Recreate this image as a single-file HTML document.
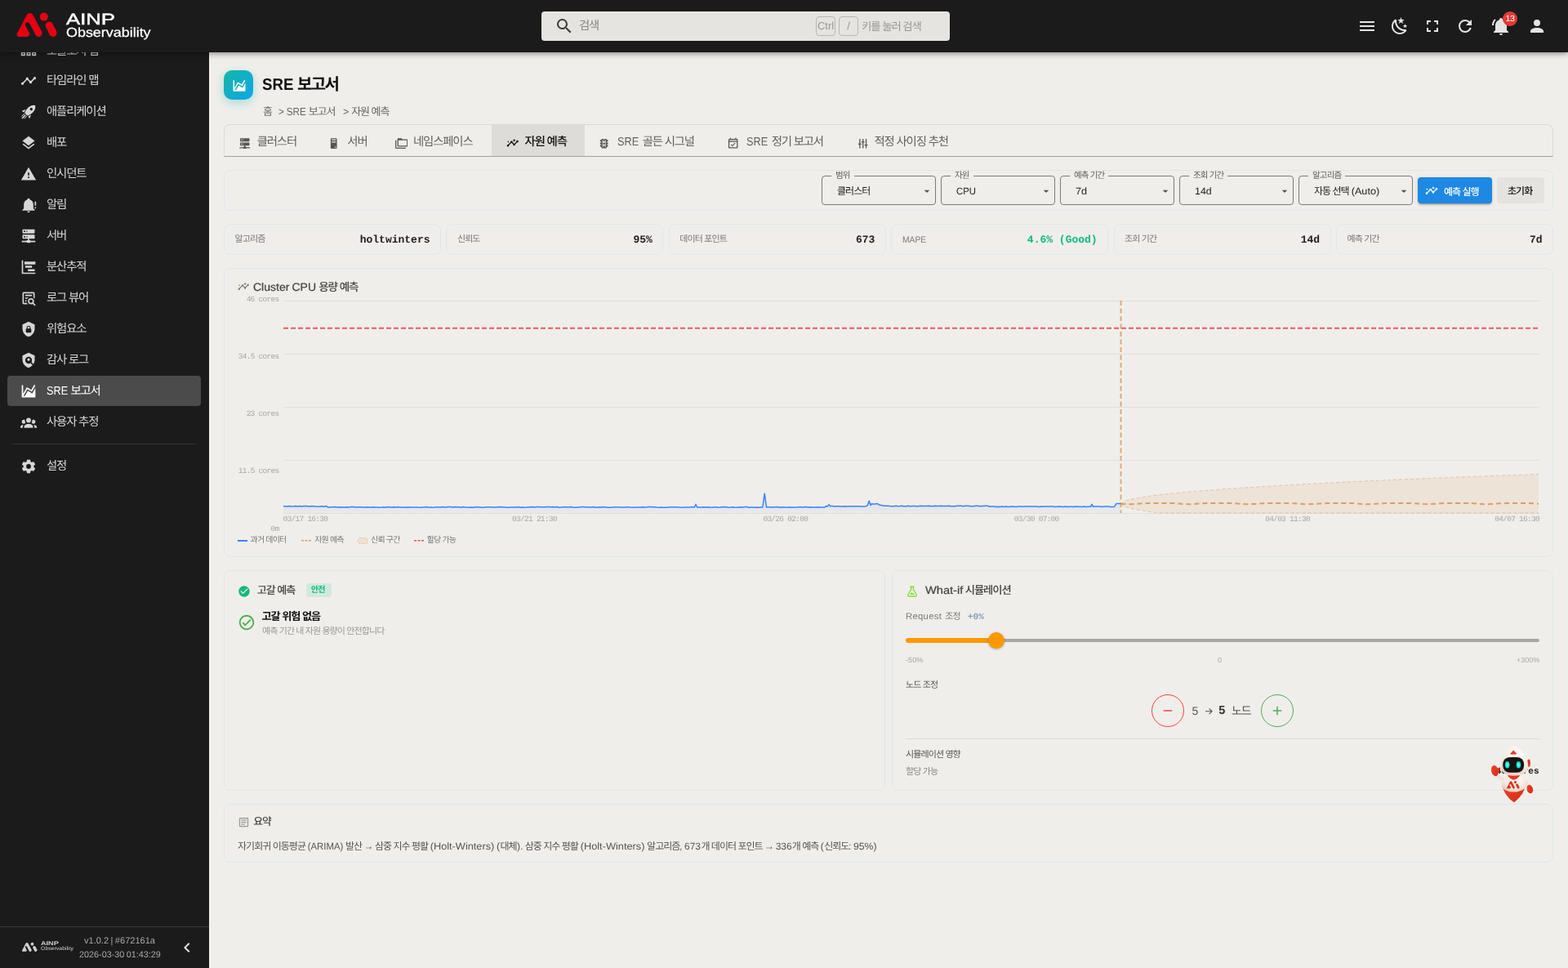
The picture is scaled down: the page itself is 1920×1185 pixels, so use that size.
<!DOCTYPE html>
<html lang="ko">
<head>
<meta charset="utf-8">
<title>SRE 보고서 - AINP Observability</title>
<style>
*{box-sizing:border-box;margin:0;padding:0}
html,body{width:1920px;height:1185px;overflow:hidden}
body{text-rendering:geometricPrecision;font-family:"Liberation Sans","Noto Sans CJK KR",sans-serif;background:#f0eeeb;color:#222;position:relative;font-size:14px}
.kt{letter-spacing:-.08em}
.x{display:inline-block;white-space:pre;transform-origin:0 50%}
.sr{position:absolute;width:1px;height:1px;overflow:hidden;clip:rect(0 0 0 0);white-space:nowrap;opacity:0}
.i{width:24px;height:24px;fill:currentColor;display:block;position:absolute}
.a{position:absolute}
.t{position:absolute;line-height:1;white-space:nowrap}
.mono{font-family:"Liberation Mono",monospace}
/* header */
#hdr{position:absolute;left:0;top:0;width:1920px;height:64px;background:#1b1b1b;z-index:5;will-change:transform;box-shadow:0 2px 4px -1px rgba(0,0,0,.2),0 4px 5px 0 rgba(0,0,0,.14),0 1px 10px 0 rgba(0,0,0,.12)}
#side{position:absolute;left:0;top:64px;width:256px;height:1121px;background:#1b1b1b;color:#d6d6d6;z-index:4;will-change:transform}
#search{position:absolute;left:663px;top:14px;width:500px;height:36px;border-radius:4px;background:#e6e4e0;color:#8a8885}
.kbd{position:absolute;top:6px;height:24px;border:1px solid #b9b7b3;border-radius:4px;color:#9a9895;font-size:13px;line-height:22px;text-align:center}
.hi{color:#e4e4e4}
.badge{position:absolute;left:1840px;top:14px;width:18px;height:18px;border-radius:9px;background:#e53935;color:#fff;font-size:10.5px;line-height:18px;text-align:center;letter-spacing:-.3px}
#search .i{left:16px;top:6px;width:24px;height:24px;color:#3a3a3a}
.hi .i{top:20px;width:24px;height:24px}
.h1{left:1662px}.h2{left:1702px}.h3{left:1742px}.h4{left:1782px}.h5{left:1826px}.h6{left:1870px}
.chv{left:217px;top:1084px;color:#e0e0e0}
/* sidebar */
.nav{position:absolute;left:9px;width:237px;height:37px;border-radius:4px}
.nav .i{left:16px;top:8.6px;width:20px;height:20px}
.nav .t{left:48px;top:11.6px;font-size:14.4px}
.nav .sm{top:6px}
.nav.on{background:#4b4b4b;color:#fff}
/* main */
#main{position:absolute;left:0;top:0;width:1920px;height:1185px;z-index:1;will-change:transform}
.tab{color:#626262;font-size:14.4px;top:167px}
.ti{width:15.4px;height:15.4px;top:168px;color:#555}
.bi{left:8.5px;top:9px;width:16px;height:16px}
.ci{left:291px;top:343.5px;width:14.5px;height:14.5px;color:#7a7a7a}
.ax{font-family:"Liberation Mono",monospace;font-size:9.5px;letter-spacing:-.72px;color:#a9a7a4;line-height:10px}
.c1{left:290.7px;top:715.5px;width:16px;height:16px;color:#10b981}
.c2{left:291px;top:751.3px;width:22px;height:22px;color:#4caf50}
.c3{left:1108.8px;top:715.5px;width:16px;height:16px;color:#8bdc39}
.c4{left:290.9px;top:998.9px;width:15px;height:15px;color:#9a9895}
.pm{left:10px;top:10px;width:18px;height:18px}
.ticon{left:9.5px;top:10px;width:18px;height:18px}
.t1{left:291.6px}.t2{left:400.9px}.t3{left:483.9px}.t4{left:619.8px;color:#111}.t5{left:732.4px}.t6{left:890.1px}.t7{left:1048.6px}
.sel{position:absolute;top:215px;width:140px;height:36px;border:1px solid #7d7b78;border-radius:4px}
.sel .lb{position:absolute;left:11px;top:-5.7px;height:10px;padding:0 5px;background:#f0eeeb;font-size:10.5px;line-height:10px;color:#5e5e5e;white-space:nowrap}
.sel .v{left:18px;top:11.5px;font-size:12px;color:#1c1c1c}
.sel .i{left:120px;top:10px;width:16px;height:16px;color:#555}
.st{position:absolute;top:274px;width:266px;height:38px;border:1px solid #dce8ed;border-radius:8px}
.st .l{left:12.5px;top:13px;font-size:11px;color:#777}
.st .r{right:12.5px;top:12px;font-size:13px;font-weight:bold;color:#1c1c1c;font-family:"Liberation Mono",monospace}
.card{position:absolute;border:1px solid #dce7ec;border-radius:8px;background:#f0eeeb}
.g{color:#6d6b68}
</style>
</head>
<body>
<div id="hdr">
  <svg class="a" style="left:0;top:0" width="256" height="64" viewBox="0 0 256 64" aria-label="AINP Observability">
    <g fill="#e60012">
      <path d="M32.79 18.30A4.30 4.30 0 0 1 40.41 18.30L51.17 38.80A4.30 4.30 0 0 1 49.36 44.61L49.36 44.61A4.30 4.30 0 0 1 43.56 42.80L36.21 28.80A2.80 2.80 0 0 0 32.42 27.62L32.42 27.62A2.80 2.80 0 0 0 31.25 31.40L35.64 39.77A3.50 3.50 0 0 1 32.54 44.90L22.96 44.90A2.50 2.50 0 0 1 20.75 41.24Z"/>
      <circle cx="53.8" cy="20.6" r="5"/>
      <path d="M60.3 31.2L65 40.4" stroke="#e60012" stroke-width="9.2" stroke-linecap="round"/>
    </g>
  </svg>
  <div class="t" id="lg1" style="left:81px;top:14.6px;font-size:19.2px;color:#fff;-webkit-text-stroke:.45px #fff;transform-origin:0 50%;transform:scaleX(1.34)">AINP</div>
  <div class="t" id="lg2" style="left:80.6px;top:32.5px;font-size:16px;color:#fff;-webkit-text-stroke:.25px #fff;transform-origin:0 50%;transform:scaleX(1.12)">Observability</div>
  <div id="search">
    <svg class="i" viewBox="0 0 24 24"><path d="M9.5,3A6.5,6.5 0 0,1 16,9.5C16,11.11 15.41,12.59 14.44,13.73L14.71,14H15.5L20.5,19L19,20.5L14,15.5V14.71L13.73,14.44C12.59,15.41 11.11,16 9.5,16A6.5,6.5 0 0,1 3,9.5A6.5,6.5 0 0,1 9.5,3M9.5,5C7,5 5,7 5,9.5C5,12 7,14 9.5,14C12,14 14,12 14,9.5C14,7 12,5 9.5,5Z"/></svg>
    <div class="t" style="left:46px;top:11px;font-size:14.4px"><span class="kt">검색</span></div>
    <div class="kbd" style="left:336px;width:24px">Ctrl</div>
    <div class="kbd" style="left:364px;width:24px">/</div>
    <div class="t" style="left:392px;top:11.5px;font-size:13.4px;color:#9a9895"><span class="kt">키를 눌러 검색</span></div>
  </div>
  <div class="hi">
    <svg class="i h1" viewBox="0 0 24 24"><path d="M3,6H21V8H3V6M3,11H21V13H3V11M3,16H21V18H3V16Z"/></svg><svg class="i h2" viewBox="0 0 24 24"><path d="M17.75,4.09L15.22,6.03L16.13,9.09L13.5,7.28L10.87,9.09L11.78,6.03L9.25,4.09L12.44,4L13.5,1L14.56,4L17.75,4.09M21.25,11L19.61,12.25L20.2,14.23L18.5,13.06L16.8,14.23L17.39,12.25L15.75,11L17.81,10.95L18.5,9L19.19,10.95L21.25,11M18.97,15.95C19.8,15.87 20.69,17.05 20.16,17.8C19.84,18.25 19.5,18.67 19.08,19.07C15.17,23 8.84,23 4.94,19.07C1.03,15.17 1.03,8.83 4.94,4.93C5.34,4.53 5.76,4.17 6.21,3.85C6.96,3.32 8.14,4.21 8.06,5.04C7.79,7.9 8.75,10.87 10.95,13.06C13.14,15.26 16.1,16.22 18.97,15.95M17.33,17.97C14.5,17.81 11.7,16.64 9.53,14.5C7.36,12.31 6.2,9.5 6.04,6.68C3.23,9.82 3.34,14.64 6.35,17.66C9.37,20.67 14.19,20.78 17.33,17.97Z"/></svg><svg class="i h3" viewBox="0 0 24 24"><path d="M5,5H10V7H7V10H5V5M14,5H19V10H17V7H14V5M17,14H19V19H14V17H17V14M10,17V19H5V14H7V17H10Z"/></svg><svg class="i h4" viewBox="0 0 24 24"><path d="M17.65,6.35C16.2,4.9 14.21,4 12,4A8,8 0 0,0 4,12A8,8 0 0,0 12,20C15.73,20 18.84,17.45 19.73,14H17.65C16.83,16.33 14.61,18 12,18A6,6 0 0,1 6,12A6,6 0 0,1 12,6C13.66,6 15.14,6.69 16.22,7.78L13,11H20V4L17.65,6.35Z"/></svg><svg class="i h5" viewBox="0 0 24 24"><path d="M21,19V20H3V19L5,17V11C5,7.9 7.03,5.17 10,4.29C10,4.19 10,4.1 10,4A2,2 0 0,1 12,2A2,2 0 0,1 14,4C14,4.1 14,4.19 14,4.29C16.97,5.17 19,7.9 19,11V17L21,19M14,21A2,2 0 0,1 12,23A2,2 0 0,1 10,21M19.75,3.19L18.33,4.61C20.04,6.3 21,8.6 21,11H23C23,8.07 21.84,5.25 19.75,3.19M1,11H3C3,8.6 3.96,6.3 5.67,4.61L4.25,3.19C2.16,5.25 1,8.07 1,11Z"/></svg><svg class="i h6" viewBox="0 0 24 24"><path d="M12,4A4,4 0 0,1 16,8A4,4 0 0,1 12,12A4,4 0 0,1 8,8A4,4 0 0,1 12,4M12,14C16.42,14 20,15.79 20,18V20H4V18C4,15.79 7.58,14 12,14Z"/></svg>
  </div>
  <div class="badge">13</div>
</div>
<div id="side">
  <div class="nav" style="top:-20px"><svg class="i sm" viewBox="0 0 24 24"><path d="M15 2H9V8H11V11H5C3.9 11 3 11.9 3 13V16H1V22H7V16H5V13H11V16H9V22H15V16H13V13H19V16H17V22H23V16H21V13C21 11.9 20.11 11 19 11H13V8H15V2M11 4H13V6H11V4M3 18H5V20H3V18M11 18H13V20H11V18M19 18H21V20H19V18Z"/></svg><div class="t"><span class="kt">토폴로지 맵</span></div></div>
  <div class="nav" style="top:16px"><svg class="i" viewBox="0 0 24 24"><path d="M3,14L3.5,14.07L8.07,9.5C7.89,8.85 8.06,8.11 8.59,7.59C9.37,6.8 10.63,6.8 11.41,7.59C11.94,8.11 12.11,8.85 11.93,9.5L14.5,12.07L15,12C15.18,12 15.35,12 15.5,12.07L19.07,8.5C19,8.35 19,8.18 19,8A2,2 0 0,1 21,6A2,2 0 0,1 23,8A2,2 0 0,1 21,10C20.82,10 20.65,10 20.5,9.93L16.93,13.5C17,13.65 17,13.82 17,14A2,2 0 0,1 15,16A2,2 0 0,1 13,14L13.07,13.5L10.5,10.93C10.18,11 9.82,11 9.5,10.93L4.93,15.5L5,16A2,2 0 0,1 3,18A2,2 0 0,1 1,16A2,2 0 0,1 3,14Z"/></svg><div class="t"><span class="kt">타임라인 맵</span></div></div>
  <div class="nav" style="top:54px"><svg class="i" viewBox="0 0 24 24"><path d="M13.13 22.19L11.5 18.36C13.07 17.78 14.54 17 15.9 16.09L13.13 22.19M5.64 12.5L1.81 10.87L7.91 8.1C7 9.46 6.22 10.93 5.64 12.5M21.61 2.39C21.61 2.39 16.66 .269 11 5.93C8.81 8.12 7.5 10.53 6.65 12.64C6.37 13.39 6.56 14.21 7.11 14.77L9.24 16.89C9.79 17.45 10.61 17.63 11.36 17.35C13.5 16.53 15.88 15.19 18.07 13C23.73 7.34 21.61 2.39 21.61 2.39M14.54 9.46C13.76 8.68 13.76 7.41 14.54 6.63S16.59 5.85 17.37 6.63C18.14 7.41 18.15 8.68 17.37 9.46C16.59 10.24 15.32 10.24 14.54 9.46M8.88 16.53L7.47 15.12L8.88 16.53M6.24 22L9.88 18.36C9.54 18.27 9.21 18.12 8.91 17.91L4.83 22H6.24M2 22H3.41L8.18 17.24L6.76 15.83L2 20.59V22M2 19.17L6.09 15.09C5.88 14.79 5.73 14.47 5.64 14.12L2 17.76V19.17Z"/></svg><div class="t"><span class="kt">애플리케이션</span></div></div>
  <div class="nav" style="top:92px"><svg class="i" viewBox="0 0 24 24"><path d="M12,16L19.36,10.27L21,9L12,2L3,9L4.63,10.27M12,18.54L4.62,12.81L3,14.07L12,21.07L21,14.07L19.37,12.8L12,18.54Z"/></svg><div class="t"><span class="kt">배포</span></div></div>
  <div class="nav" style="top:130px"><svg class="i" viewBox="0 0 24 24"><path d="M13,14H11V10H13M13,18H11V16H13M1,21H23L12,2L1,21Z"/></svg><div class="t"><span class="kt">인시던트</span></div></div>
  <div class="nav" style="top:168px"><svg class="i" viewBox="0 0 24 24"><path d="M23,7V13H21V7M21,15H23V17H21M12,2A2,2 0 0,0 10,4A2,2 0 0,0 10,4.29C7.12,5.14 5,7.82 5,11V17L3,19V20H21V19L19,17V11C19,7.82 16.88,5.14 14,4.29A2,2 0 0,0 14,4A2,2 0 0,0 12,2M10,21A2,2 0 0,0 12,23A2,2 0 0,0 14,21H10Z"/></svg><div class="t"><span class="kt">알림</span></div></div>
  <div class="nav" style="top:206px"><svg class="i" viewBox="0 0 24 24"><path d="M13,18H14A1,1 0 0,1 15,19H22V21H15A1,1 0 0,1 14,22H10A1,1 0 0,1 9,21H2V19H9A1,1 0 0,1 10,18H11V16H4A1,1 0 0,1 3,15V11A1,1 0 0,1 4,10H20A1,1 0 0,1 21,11V15A1,1 0 0,1 20,16H13V18M4,2H20A1,1 0 0,1 21,3V7A1,1 0 0,1 20,8H4A1,1 0 0,1 3,7V3A1,1 0 0,1 4,2M9,6H10V4H9V6M9,14H10V12H9V14M5,4V6H7V4H5M5,12V14H7V12H5Z"/></svg><div class="t"><span class="kt">서버</span></div></div>
  <div class="nav" style="top:244px"><svg class="i" viewBox="0 0 24 24"><path d="M2,2H4V20H22V22H2V2M7,10H17V13H7V10M11,15H21V18H11V15M6,4H22V8H6V4Z"/></svg><div class="t"><span class="kt">분산추적</span></div></div>
  <div class="nav" style="top:282px"><svg class="i" viewBox="0 0 24 24"><path d="M15.5,12C18,12 20,14 20,16.5C20,17.38 19.75,18.21 19.31,18.9L22.39,22L21,23.39L17.88,20.32C17.19,20.75 16.37,21 15.5,21C13,21 11,19 11,16.5C11,14 13,12 15.5,12M15.5,14A2.5,2.5 0 0,0 13,16.5A2.5,2.5 0 0,0 15.5,19A2.5,2.5 0 0,0 18,16.5A2.5,2.5 0 0,0 15.5,14M5,3H19C20.11,3 21,3.89 21,5V13.03C20.5,12.23 19.81,11.54 19,11V5H5V19H9.5C9.81,19.75 10.26,20.42 10.81,21H5C3.89,21 3,20.11 3,19V5C3,3.89 3.89,3 5,3M7,7H17V9H7V7M7,11H12.03C11.23,11.5 10.54,12.19 10,13H7V11M7,15H9.17C9.06,15.5 9,16 9,16.5V17H7V15Z"/></svg><div class="t"><span class="kt">로그 뷰어</span></div></div>
  <div class="nav" style="top:320px"><svg class="i" viewBox="0 0 24 24"><path d="M12,1L3,5V11C3,16.55 6.84,21.74 12,23C17.16,21.74 21,16.55 21,11V5L12,1M12,7C13.4,7 14.8,8.1 14.8,9.5V11C15.4,11 16,11.6 16,12.3V15.8C16,16.4 15.4,17 14.7,17H9.2C8.6,17 8,16.4 8,15.7V12.2C8,11.6 8.6,11 9.2,11V9.5C9.2,8.1 10.6,7 12,7M12,8.2C11.2,8.2 10.5,8.7 10.5,9.5V11H13.5V9.5C13.5,8.7 12.8,8.2 12,8.2Z"/></svg><div class="t"><span class="kt">위험요소</span></div></div>
  <div class="nav" style="top:358px"><svg class="i" viewBox="0 0 24 24"><path d="M12,9A2,2 0 0,1 14,11A2,2 0 0,1 12,13A2,2 0 0,1 10,11A2,2 0 0,1 12,9M17.86,19.31C16.23,21.22 14.28,22.45 12,23C9.44,22.39 7.3,20.93 5.58,18.63C3.86,16.34 3,13.8 3,11V5L12,1L21,5V11C21,13.39 20.36,15.61 19.08,17.67L16.17,14.76C16.69,13.97 17,13 17,12C17,9.23 14.76,7 12,7C9.24,7 7,9.23 7,12C7,14.76 9.24,17 12,17C13,17 13.97,16.69 14.76,16.17L17.86,19.31Z"/></svg><div class="t"><span class="kt">감사 로그</span></div></div>
  <div class="nav on" style="top:396px"><svg class="i" viewBox="0 0 24 24"><path d="M17.45,15.18L22,7.31V19L22,21H2V3H4V15.54L9.5,6L16,9.78L20.24,2.45L21.97,3.45L16.74,12.5L10.23,8.75L4.31,19H6.57L10.96,11.44L17.45,15.18Z"/></svg><div class="t"><span class="x" style="width:2.0440em;transform:scaleX(0.8851);word-spacing:-0.0248em">SRE </span><span class="kt">보고서</span></div></div>
  <div class="nav" style="top:434px"><svg class="i" viewBox="0 0 24 24"><path d="M12,5.5A3.5,3.5 0 0,1 15.5,9A3.5,3.5 0 0,1 12,12.5A3.5,3.5 0 0,1 8.5,9A3.5,3.5 0 0,1 12,5.5M5,8C5.56,8 6.08,8.15 6.53,8.42C6.38,9.85 6.8,11.27 7.66,12.38C7.16,13.34 6.16,14 5,14A3,3 0 0,1 2,11A3,3 0 0,1 5,8M19,8A3,3 0 0,1 22,11A3,3 0 0,1 19,14C17.84,14 16.84,13.34 16.34,12.38C17.2,11.27 17.62,9.85 17.47,8.42C17.92,8.15 18.44,8 19,8M5.5,18.25C5.5,16.18 8.41,14.5 12,14.5C15.59,14.5 18.5,16.18 18.5,18.25V20H5.5V18.25M0,20V18.5C0,17.11 1.89,15.94 4.45,15.6C3.86,16.28 3.5,17.22 3.5,18.25V20H0M24,20H20.5V18.25C20.5,17.22 20.14,16.28 19.55,15.6C22.11,15.94 24,17.11 24,18.5V20Z"/></svg><div class="t"><span class="kt">사용자 추정</span></div></div>
  <div class="a" style="left:14px;top:479px;width:227px;height:1px;background:#303030"></div>
  <div class="nav" style="top:488px"><svg class="i" viewBox="0 0 24 24"><path d="M12,15.5A3.5,3.5 0 0,1 8.5,12A3.5,3.5 0 0,1 12,8.5A3.5,3.5 0 0,1 15.5,12A3.5,3.5 0 0,1 12,15.5M19.43,12.97C19.47,12.65 19.5,12.33 19.5,12C19.5,11.67 19.47,11.34 19.43,11L21.54,9.37C21.73,9.22 21.78,8.95 21.66,8.73L19.66,5.27C19.54,5.05 19.27,4.96 19.05,5.05L16.56,6.05C16.04,5.66 15.5,5.32 14.87,5.07L14.5,2.42C14.46,2.18 14.25,2 14,2H10C9.75,2 9.54,2.18 9.5,2.42L9.13,5.07C8.5,5.32 7.96,5.66 7.44,6.05L4.95,5.05C4.73,4.96 4.46,5.05 4.34,5.27L2.34,8.73C2.21,8.95 2.27,9.22 2.46,9.37L4.57,11C4.53,11.34 4.5,11.67 4.5,12C4.5,12.33 4.53,12.65 4.57,12.97L2.46,14.63C2.27,14.78 2.21,15.05 2.34,15.27L4.34,18.73C4.46,18.95 4.73,19.03 4.95,18.95L7.44,17.94C7.96,18.34 8.5,18.68 9.13,18.93L9.5,21.58C9.54,21.82 9.75,22 10,22H14C14.25,22 14.46,21.82 14.5,21.58L14.87,18.93C15.5,18.67 16.04,18.34 16.56,17.94L19.05,18.95C19.27,19.03 19.54,18.95 19.66,18.73L21.66,15.27C21.78,15.05 21.73,14.78 21.54,14.63L19.43,12.97Z"/></svg><div class="t"><span class="kt">설정</span></div></div>
  <div class="a" style="left:0;top:1070px;width:256px;height:1px;background:#3a3a3a"></div>
  <svg class="a" style="left:26px;top:1086px" width="64" height="20" viewBox="18 12 170 40" aria-hidden="true">
    <g fill="#cfcfcf"><path d="M32.79 18.30A4.30 4.30 0 0 1 40.41 18.30L51.17 38.80A4.30 4.30 0 0 1 49.36 44.61L49.36 44.61A4.30 4.30 0 0 1 43.56 42.80L36.21 28.80A2.80 2.80 0 0 0 32.42 27.62L32.42 27.62A2.80 2.80 0 0 0 31.25 31.40L35.64 39.77A3.50 3.50 0 0 1 32.54 44.90L22.96 44.90A2.50 2.50 0 0 1 20.75 41.24Z"/><circle cx="53.8" cy="20.6" r="5"/><path d="M60.3 31.2L65 40.4" stroke="#cfcfcf" stroke-width="9.2" stroke-linecap="round"/></g>
  </svg>
  <div class="t" style="left:50px;top:1087.6px;font-size:7px;font-weight:bold;color:#cfcfcf;transform-origin:0 50%;transform:scaleX(1.3)">AINP</div>
  <div class="t" style="left:50px;top:1095px;font-size:6.3px;color:#cfcfcf;transform-origin:0 50%;transform:scaleX(1.1)">Observability</div>
  <div class="t" style="left:103px;top:1083px;font-size:11px;color:#a9a9a9"><span class="x" style="width:7.9080em;transform:scaleX(1.0036);word-spacing:-0.0546em">v1.0.2 | #672161a</span></div>
  <div class="t" style="left:97px;top:1100px;font-size:10.8px;color:#a9a9a9"><span class="x" style="width:9.2440em;transform:scaleX(1.0014);word-spacing:-0.0541em">2026-03-30 01:43:29</span></div>
  <svg class="i chv" viewBox="0 0 24 24"><path d="M15.41,16.58L10.83,12L15.41,7.41L14,6L8,12L14,18L15.41,16.58Z"/></svg>
</div>
<div id="main">
  <div class="a" style="left:274px;top:86px;width:36px;height:36px;border-radius:10px;background:linear-gradient(135deg,#14b8a6,#0ea5e9);box-shadow:0 4px 12px rgba(20,184,166,.32);color:#fff"><svg class="i ticon" viewBox="0 0 24 24"><path d="M17.45,15.18L22,7.31V19L22,21H2V3H4V15.54L9.5,6L16,9.78L20.24,2.45L21.97,3.45L16.74,12.5L10.23,8.75L4.31,19H6.57L10.96,11.44L17.45,15.18Z"/></svg></div>
  <div class="t" style="left:321px;top:94px;font-size:20px;font-weight:bold;color:#111"><span class="x" style="width:2.1480em;transform:scaleX(0.9343);word-spacing:-0.0349em">SRE </span><span class="kt">보고서</span></div>
  <div class="t g" style="left:322px;top:130px;font-size:13px;color:#666"><span class="kt">홈</span></div>
  <div class="t g" style="left:341px;top:130px;font-size:13px;color:#666"><span class="x" style="width:2.8230em;transform:scaleX(0.8996);word-spacing:-0.0288em">&gt; SRE </span><span class="kt">보고서</span></div>
  <div class="t g" style="left:420px;top:130px;font-size:13px;color:#666"><span class="x" style="width:0.7790em;transform:scaleX(0.9504);word-spacing:-0.0421em">&gt; </span><span class="kt">자원 예측</span></div>

  <div class="a" style="left:274px;top:152px;width:1628px;height:40px;border:1px solid #dcdad6;border-bottom:1px solid #a3a19e;border-radius:8px 8px 0 0"></div>
  <div class="a" style="left:602px;top:153px;width:114px;height:38px;background:#dedcd9"></div>
  <svg class="i ti t1" viewBox="0 0 24 24"><path d="M13,18H14A1,1 0 0,1 15,19H22V21H15A1,1 0 0,1 14,22H10A1,1 0 0,1 9,21H2V19H9A1,1 0 0,1 10,18H11V16H4A1,1 0 0,1 3,15V11A1,1 0 0,1 4,10H20A1,1 0 0,1 21,11V15A1,1 0 0,1 20,16H13V18M4,2H20A1,1 0 0,1 21,3V7A1,1 0 0,1 20,8H4A1,1 0 0,1 3,7V3A1,1 0 0,1 4,2M9,6H10V4H9V6M9,14H10V12H9V14M5,4V6H7V4H5M5,12V14H7V12H5Z"/></svg><div class="t tab" style="left:314.7px"><span class="kt">클러스터</span></div>
  <svg class="i ti t2" viewBox="0 0 24 24"><path d="M8,2H16A2,2 0 0,1 18,4V20A2,2 0 0,1 16,22H8A2,2 0 0,1 6,20V4A2,2 0 0,1 8,2M8,4V6H16V4H8M16,8H8V10H16V8M16,18H14V20H16V18Z"/></svg><div class="t tab" style="left:425.3px"><span class="kt">서버</span></div>
  <svg class="i ti t3" viewBox="0 0 24 24"><path d="M22,4A2,2 0 0,1 24,6V16A2,2 0 0,1 22,18H6A2,2 0 0,1 4,16V4A2,2 0 0,1 6,2H12L14,4H22M2,6V20H20V22H2A2,2 0 0,1 0,20V11H0V6H2M6,6V16H22V6H6Z"/></svg><div class="t tab" style="left:506px"><span class="kt">네임스페이스</span></div>
  <svg class="i ti t4" viewBox="0 0 24 24"><path d="M21 6A2 2 0 0 0 19 8A1.77 1.77 0 0 0 19.09 8.5L15.5 12.09A1.77 1.77 0 0 0 15 12A2 2 0 0 0 14.5 12.07L11.93 9.5A2 2 0 0 0 12 9A2 2 0 0 0 8 9A2 2 0 0 0 8.07 9.5L3.5 14.07A2 2 0 0 0 3 14A2 2 0 1 0 5 16A2 2 0 0 0 4.93 15.5L9.5 10.93A1.79 1.79 0 0 0 10.5 10.93L13.07 13.5A2 2 0 0 0 13 14A2 2 0 0 0 17 14A1.77 1.77 0 0 0 16.91 13.5L20.5 9.91A1.77 1.77 0 0 0 21 10A2 2 0 0 0 21 6M15 9L15.94 6.93L18 6L15.94 5.07L15 3L14.08 5.07L12 6L14.08 6.93M3.5 11L4 9L6 8.5L4 8L3.5 6L3 8L1 8.5L3 9Z"/></svg><div class="t tab" style="left:642.6px;color:#111"><span class="kt" style="font-weight:500">자원 예측</span></div>
  <svg class="i ti t5" viewBox="0 0 24 24"><path d="M12 8C10.9 8 10 7.1 10 6S10.9 4 12 4 14 4.9 14 6 13.1 8 12 8M12 10C10.9 10 10 10.9 10 12S10.9 14 12 14 14 13.1 14 12 13.1 10 12 10M12 16C10.9 16 10 16.9 10 18S10.9 20 12 20 14 19.1 14 18 13.1 16 12 16M20 10H17V8.86C18.72 8.41 20 6.86 20 5H17V4C17 3.45 16.55 3 16 3H8C7.45 3 7 3.45 7 4V5H4C4 6.86 5.28 8.41 7 8.86V10H4C4 11.86 5.28 13.41 7 13.86V15H4C4 16.86 5.28 18.41 7 18.86V20C7 20.55 7.45 21 8 21H16C16.55 21 17 20.55 17 20V18.86C18.72 18.41 20 16.86 20 15H17V13.86C18.72 13.41 20 11.86 20 10M15 19H9V5H15V19Z"/></svg><div class="t tab" style="left:756px"><span class="x" style="width:2.1290em;transform:scaleX(0.8851);word-spacing:0.0713em">SRE </span><span class="kt">골든 시그널</span></div>
  <svg class="i ti t6" viewBox="0 0 24 24"><path d="M19 3H18V1H16V3H8V1H6V3H5C3.9 3 3 3.9 3 5V19C3 20.11 3.9 21 5 21H19C20.11 21 21 20.11 21 19V5C21 3.9 20.11 3 19 3M19 19H5V9H19V19M5 7V5H19V7H5M10.56 17.46L16.5 11.53L15.43 10.47L10.56 15.34L8.45 13.23L7.39 14.29L10.56 17.46Z"/></svg><div class="t tab" style="left:914px"><span class="x" style="width:2.1290em;transform:scaleX(0.8851);word-spacing:0.0713em">SRE </span><span class="kt">정기 보고서</span></div>
  <svg class="i ti t7" viewBox="0 0 24 24"><path d="M5,3V12H3V14H5V21H7V14H9V12H7V3M11,3V8H9V10H11V21H13V10H15V8H13V3M17,3V14H15V16H17V21H19V16H21V14H19V3"/></svg><div class="t tab" style="left:1070.5px"><span class="kt">적정 사이징 추천</span></div>

  <div class="card" style="left:274px;top:208px;width:1628px;height:50px"></div>
  <div class="sel" style="left:1006px"><div class="lb"><span class="kt">범위</span></div><div class="t v"><span class="kt">클러스터</span></div><svg class="i" viewBox="0 0 24 24"><path d="M7,10L12,15L17,10H7Z"/></svg></div>
  <div class="sel" style="left:1152px"><div class="lb"><span class="kt">자원</span></div><div class="t v"><span class="x" style="width:1.9920em;transform:scaleX(0.9435)">CPU</span></div><svg class="i" viewBox="0 0 24 24"><path d="M7,10L12,15L17,10H7Z"/></svg></div>
  <div class="sel" style="left:1298px"><div class="lb"><span class="kt">예측 기간</span></div><div class="t v"><span class="x" style="width:1.1750em;transform:scaleX(1.0564)">7d</span></div><svg class="i" viewBox="0 0 24 24"><path d="M7,10L12,15L17,10H7Z"/></svg></div>
  <div class="sel" style="left:1444px"><div class="lb"><span class="kt">조회 기간</span></div><div class="t v"><span class="x" style="width:1.7300em;transform:scaleX(1.0369)">14d</span></div><svg class="i" viewBox="0 0 24 24"><path d="M7,10L12,15L17,10H7Z"/></svg></div>
  <div class="sel" style="left:1590px"><div class="lb"><span class="kt">알고리즘</span></div><div class="t v"><span class="kt">자동 선택</span><span class="x" style="width:3.0980em;transform:scaleX(1.0554);word-spacing:-0.0656em"> (Auto)</span></div><svg class="i" viewBox="0 0 24 24"><path d="M7,10L12,15L17,10H7Z"/></svg></div>
  <div class="a" style="left:1736px;top:217px;width:91px;height:32px;border-radius:4px;background:#1e88e5;color:#fff;box-shadow:0 3px 1px -2px rgba(0,0,0,.2),0 2px 2px rgba(0,0,0,.14),0 1px 5px rgba(0,0,0,.12)">
    <svg class="i bi" viewBox="0 0 24 24"><path d="M21 6A2 2 0 0 0 19 8A1.77 1.77 0 0 0 19.09 8.5L15.5 12.09A1.77 1.77 0 0 0 15 12A2 2 0 0 0 14.5 12.07L11.93 9.5A2 2 0 0 0 12 9A2 2 0 0 0 8 9A2 2 0 0 0 8.07 9.5L3.5 14.07A2 2 0 0 0 3 14A2 2 0 1 0 5 16A2 2 0 0 0 4.93 15.5L9.5 10.93A1.79 1.79 0 0 0 10.5 10.93L13.07 13.5A2 2 0 0 0 13 14A2 2 0 0 0 17 14A1.77 1.77 0 0 0 16.91 13.5L20.5 9.91A1.77 1.77 0 0 0 21 10A2 2 0 0 0 21 6M15 9L15.94 6.93L18 6L15.94 5.07L15 3L14.08 5.07L12 6L14.08 6.93M3.5 11L4 9L6 8.5L4 8L3.5 6L3 8L1 8.5L3 9Z"/></svg>
    <div class="t" style="left:32px;top:11.5px;font-size:12px"><span class="kt" style="font-weight:500">예측 실행</span></div>
  </div>
  <div class="a" style="left:1833px;top:217px;width:58px;height:32px;border-radius:4px;background:#e5e3e0;color:#111">
    <div class="t" style="left:13px;top:11px;font-size:12px"><span class="kt" style="font-weight:500">초기화</span></div>
  </div>

  <div class="st" style="left:274px"><div class="t l"><span class="kt">알고리즘</span></div><div class="t r">holtwinters</div></div>
  <div class="st" style="left:546.4px"><div class="t l"><span class="kt">신뢰도</span></div><div class="t r">95%</div></div>
  <div class="st" style="left:818.8px"><div class="t l"><span class="kt">데이터 포인트</span></div><div class="t r">673</div></div>
  <div class="st" style="left:1091.2px"><div class="t l" style="top:14px"><span class="x" style="width:2.6420em;transform:scaleX(0.9323)">MAPE</span></div><div class="t r" style="color:#10b981">4.6% (Good)</div></div>
  <div class="st" style="left:1363.6px"><div class="t l"><span class="kt">조회 기간</span></div><div class="t r">14d</div></div>
  <div class="st" style="left:1636px"><div class="t l"><span class="kt">예측 기간</span></div><div class="t r">7d</div></div>
<div class="card" style="left:274px;top:328px;width:1628px;height:354px"></div>
<svg class="i ci" viewBox="0 0 24 24"><path d="M21 6A2 2 0 0 0 19 8A1.77 1.77 0 0 0 19.09 8.5L15.5 12.09A1.77 1.77 0 0 0 15 12A2 2 0 0 0 14.5 12.07L11.93 9.5A2 2 0 0 0 12 9A2 2 0 0 0 8 9A2 2 0 0 0 8.07 9.5L3.5 14.07A2 2 0 0 0 3 14A2 2 0 1 0 5 16A2 2 0 0 0 4.93 15.5L9.5 10.93A1.79 1.79 0 0 0 10.5 10.93L13.07 13.5A2 2 0 0 0 13 14A2 2 0 0 0 17 14A1.77 1.77 0 0 0 16.91 13.5L20.5 9.91A1.77 1.77 0 0 0 21 10A2 2 0 0 0 21 6M15 9L15.94 6.93L18 6L15.94 5.07L15 3L14.08 5.07L12 6L14.08 6.93M3.5 11L4 9L6 8.5L4 8L3.5 6L3 8L1 8.5L3 9Z"/></svg>
<div class="t" style="left:310px;top:345px;font-size:13.6px;color:#444"><span class="x" style="width:5.8920em;transform:scaleX(1.0309);word-spacing:-0.0596em;-webkit-text-stroke:.22px currentColor">Cluster CPU </span><span class="kt" style="font-weight:500">용량 예측</span></div>
<svg class="a" style="left:274px;top:328px" width="1627" height="354" viewBox="274 328 1627 354" aria-label="Cluster CPU forecast chart">
<path d="M347 368.5H1885" stroke="#e1dfdc" stroke-width="1"/>
<path d="M347 433.5H1885" stroke="#e1dfdc" stroke-width="1"/>
<path d="M347 498.5H1885" stroke="#e1dfdc" stroke-width="1"/>
<path d="M347 563.5H1885" stroke="#e1dfdc" stroke-width="1"/>
<path d="M347 628.5H1885" stroke="#e1dfdc" stroke-width="1"/>
<defs><linearGradient id="GA" x1="0" y1="604" x2="0" y2="628" gradientUnits="userSpaceOnUse"><stop offset="0" stop-color="rgba(59,130,246,.16)"/><stop offset="1" stop-color="rgba(59,130,246,.04)"/></linearGradient></defs>
<path d="M347.0 619.8L349.5 619.7L352.0 620.0L354.5 619.6L357.0 619.9L359.5 619.8L362.0 619.6L364.5 619.9L367.0 619.6L369.5 619.9L372.0 619.6L374.5 619.6L377.0 619.8L379.5 620.1L382.0 619.6L384.5 619.7L387.0 620.0L389.5 620.2L392.0 620.0L394.5 619.8L397.0 620.2L399.5 619.6L402.0 621.2L404.5 620.8L407.0 620.7L409.5 620.6L412.0 620.8L414.5 621.1L417.0 620.7L419.5 621.0L422.0 621.0L424.5 620.8L427.0 620.9L429.5 620.6L432.0 620.6L434.5 620.7L437.0 621.0L439.5 620.8L442.0 620.8L444.5 621.0L447.0 620.9L449.5 620.8L452.0 621.1L454.5 621.0L457.0 620.7L459.5 621.0L462.0 620.9L464.5 621.2L467.0 621.1L469.5 620.8L472.0 621.2L474.5 620.6L477.0 620.8L479.5 621.1L482.0 620.7L484.5 620.9L487.0 620.6L489.5 621.0L492.0 621.1L494.5 621.0L497.0 621.2L499.5 620.8L502.0 621.0L504.5 621.0L507.0 621.0L509.5 620.9L512.0 621.1L514.5 621.2L517.0 620.9L519.5 621.0L522.0 620.6L524.5 621.0L527.0 621.0L529.5 621.2L532.0 621.1L534.5 620.7L537.0 620.8L539.5 621.0L542.0 620.6L544.5 620.9L547.0 620.7L549.5 620.6L552.0 620.6L554.5 621.1L557.0 620.6L559.5 620.7L562.0 620.8L564.5 621.2L567.0 620.6L569.5 620.9L572.0 620.9L574.5 621.2L577.0 621.1L579.5 621.2L582.0 620.7L584.5 620.8L587.0 620.8L589.5 621.2L592.0 621.2L594.5 620.7L597.0 620.7L599.5 620.7L602.0 620.7L604.5 620.9L607.0 621.0L609.5 620.7L612.0 620.6L614.5 620.8L617.0 620.8L619.5 620.9L622.0 621.2L624.5 621.0L627.0 620.9L629.5 621.0L632.0 621.0L634.5 620.6L637.0 621.2L639.5 621.1L642.0 621.2L644.5 621.1L647.0 620.8L649.5 620.8L652.0 620.6L654.5 621.0L657.0 620.6L659.5 620.6L662.0 620.7L664.5 620.7L667.0 620.8L669.5 620.6L672.0 620.6L674.5 620.7L677.0 620.6L679.5 620.8L682.0 620.6L684.5 621.2L687.0 621.0L689.5 620.7L692.0 620.7L694.5 620.8L697.0 620.8L699.5 620.6L702.0 621.1L704.5 621.2L707.0 620.9L709.5 620.9L712.0 620.6L714.5 620.6L717.0 620.8L719.5 620.7L722.0 621.1L724.5 620.7L727.0 620.6L729.5 621.2L732.0 620.9L734.5 620.7L737.0 620.9L739.5 620.6L742.0 620.9L744.5 621.2L747.0 621.2L749.5 621.0L752.0 620.7L754.5 620.8L757.0 620.7L759.5 621.1L762.0 620.9L764.5 621.1L767.0 620.8L769.5 620.7L772.0 621.1L774.5 621.2L777.0 621.1L779.5 621.1L782.0 621.1L784.5 621.1L787.0 620.7L789.5 620.9L792.0 620.8L794.5 620.6L797.0 620.6L799.5 620.7L802.0 620.7L804.5 621.0L807.0 621.2L809.5 620.9L812.0 621.2L814.5 621.2L817.0 621.2L819.5 620.8L822.0 620.7L824.5 620.7L827.0 620.7L829.5 620.7L832.0 621.0L834.5 621.2L837.0 621.1L839.5 620.9L842.0 621.0L844.5 621.1L847.0 620.6L849.5 621.0L850.4 621.0L852.0 617.2L853.6 621.0L854.5 621.1L857.0 621.1L859.5 620.9L862.0 620.7L864.5 621.1L867.0 620.8L869.5 621.1L872.0 621.2L874.5 620.8L877.0 620.8L879.5 621.2L882.0 621.1L884.5 620.7L887.0 620.6L889.5 620.7L892.0 621.2L894.5 621.1L897.0 620.7L899.5 621.1L902.0 621.2L904.5 621.0L907.0 620.8L909.5 620.9L912.0 620.6L914.5 620.6L917.0 621.2L919.5 621.0L922.0 620.9L924.5 621.2L927.0 620.9L929.5 621.2L932.0 621.1L933.8 621.0L936.2 604.2L938.6 621.0L939.5 620.8L942.0 620.7L944.5 621.0L947.0 620.7L949.5 620.8L952.0 620.6L954.5 621.2L957.0 620.8L959.5 620.9L962.0 621.0L964.5 621.2L967.0 620.8L969.5 621.2L972.0 620.9L974.5 620.9L977.0 620.9L979.5 620.6L982.0 620.9L984.5 620.7L987.0 620.6L989.5 621.1L992.0 620.7L994.5 620.9L997.0 621.1L999.5 620.9L1002.0 620.8L1004.5 620.9L1007.0 620.9L1009.5 621.1L1012.0 619.5L1013.4 619.9L1015.0 617.6L1016.6 619.9L1017.0 619.6L1019.5 619.6L1022.0 620.0L1024.5 619.8L1027.0 619.8L1029.5 620.0L1032.0 620.1L1034.5 619.8L1037.0 619.9L1039.5 619.8L1042.0 619.8L1044.5 619.9L1047.0 619.8L1049.5 619.8L1052.0 619.8L1054.5 620.1L1057.0 619.9L1059.5 620.1L1062.0 618.8L1062.4 618.6L1064.2 613.3L1066.0 618.6L1067.0 616.8L1069.5 617.1L1072.0 617.0L1074.5 616.5L1077.0 618.3L1079.5 618.6L1082.0 619.2L1084.5 619.3L1087.0 619.2L1089.5 619.6L1092.0 619.7L1094.5 619.8L1097.0 619.3L1099.5 619.7L1102.0 619.6L1104.5 619.3L1107.0 619.8L1109.5 619.8L1112.0 619.3L1114.5 619.8L1117.0 619.4L1119.5 619.5L1122.0 619.8L1124.5 619.7L1127.0 619.3L1129.5 619.5L1132.0 619.5L1134.5 619.4L1137.0 619.3L1139.5 619.4L1142.0 619.7L1144.5 619.2L1147.0 619.5L1149.5 619.5L1152.0 619.2L1154.5 619.4L1157.0 619.6L1159.5 619.5L1162.0 619.2L1164.5 619.8L1167.0 619.7L1169.5 619.8L1172.0 619.2L1174.5 619.3L1177.0 619.2L1179.5 619.7L1182.0 619.3L1184.5 619.2L1187.0 619.4L1189.5 619.8L1192.0 619.7L1194.5 619.3L1197.0 619.3L1199.5 619.8L1202.0 619.5L1204.5 619.6L1207.0 619.2L1209.5 619.2L1212.0 620.3L1214.5 620.1L1217.0 619.9L1219.5 620.5L1222.0 620.3L1224.5 620.4L1227.0 619.9L1229.5 620.4L1232.0 619.9L1234.5 620.5L1237.0 620.2L1239.5 620.1L1242.0 620.2L1244.5 620.5L1247.0 620.0L1249.5 619.9L1252.0 620.2L1254.5 620.0L1257.0 619.9L1259.5 620.0L1262.0 619.9L1264.5 620.0L1267.0 620.1L1269.5 620.1L1272.0 620.4L1274.5 620.1L1277.0 620.2L1279.5 620.0L1282.0 620.1L1284.5 619.9L1287.0 620.0L1289.5 619.9L1292.0 620.4L1294.5 620.2L1297.0 620.0L1299.5 620.2L1302.0 620.5L1304.5 619.9L1307.0 620.4L1309.5 620.2L1312.0 620.2L1314.5 620.4L1317.0 620.1L1319.5 620.2L1322.0 620.3L1324.5 620.5L1327.0 620.1L1329.5 620.4L1332.0 620.3L1334.5 620.3L1335.4 620.3L1337.0 617.3L1338.6 620.3L1339.5 620.1L1342.0 619.9L1344.5 619.9L1347.0 619.9L1349.5 620.4L1352.0 620.0L1354.5 620.0L1357.0 619.9L1359.5 620.4L1362.0 620.5L1364.5 620.3L1367.0 616.5L1369.5 616.5L1372.0 616.6L1372.5 616.7L1372.5 628L347 628Z" fill="url(#GA)"/>
<path d="M1372.5 616.8L1376.5 613.6L1380.5 612.2L1384.5 611.2L1388.5 610.4L1392.5 609.6L1396.5 608.9L1400.5 608.3L1404.5 607.7L1408.5 607.1L1412.5 606.6L1416.5 606.1L1420.5 605.6L1424.5 605.2L1428.5 604.8L1432.5 604.3L1436.5 603.9L1440.5 603.5L1444.5 603.1L1448.5 602.8L1452.5 602.4L1456.5 602.0L1460.5 601.7L1464.5 601.4L1468.5 601.0L1472.5 600.7L1476.5 600.4L1480.5 600.1L1484.5 599.8L1488.5 599.5L1492.5 599.2L1496.5 598.9L1500.5 598.6L1504.5 598.3L1508.5 598.0L1512.5 597.8L1516.5 597.5L1520.5 597.2L1524.5 597.0L1528.5 596.7L1532.5 596.4L1536.5 596.2L1540.5 595.9L1544.5 595.7L1548.5 595.4L1552.5 595.2L1556.5 595.0L1560.5 594.7L1564.5 594.5L1568.5 594.3L1572.5 594.0L1576.5 593.8L1580.5 593.6L1584.5 593.4L1588.5 593.1L1592.5 592.9L1596.5 592.7L1600.5 592.5L1604.5 592.3L1608.5 592.1L1612.5 591.9L1616.5 591.7L1620.5 591.4L1624.5 591.2L1628.5 591.0L1632.5 590.8L1636.5 590.6L1640.5 590.4L1644.5 590.2L1648.5 590.1L1652.5 589.9L1656.5 589.7L1660.5 589.5L1664.5 589.3L1668.5 589.1L1672.5 588.9L1676.5 588.7L1680.5 588.5L1684.5 588.4L1688.5 588.2L1692.5 588.0L1696.5 587.8L1700.5 587.6L1704.5 587.5L1708.5 587.3L1712.5 587.1L1716.5 586.9L1720.5 586.8L1724.5 586.6L1728.5 586.4L1732.5 586.3L1736.5 586.1L1740.5 585.9L1744.5 585.7L1748.5 585.6L1752.5 585.4L1756.5 585.3L1760.5 585.1L1764.5 584.9L1768.5 584.8L1772.5 584.6L1776.5 584.4L1780.5 584.3L1784.5 584.1L1788.5 584.0L1792.5 583.8L1796.5 583.6L1800.5 583.5L1804.5 583.3L1808.5 583.2L1812.5 583.0L1816.5 582.9L1820.5 582.7L1824.5 582.6L1828.5 582.4L1832.5 582.3L1836.5 582.1L1840.5 582.0L1844.5 581.8L1848.5 581.7L1852.5 581.5L1856.5 581.4L1860.5 581.2L1864.5 581.1L1868.5 580.9L1872.5 580.8L1876.5 580.7L1880.5 580.5L1884.0 580.4L1884.0 628.0L1880.5 628.0L1876.5 628.0L1872.5 628.0L1868.5 628.0L1864.5 628.0L1860.5 628.0L1856.5 628.0L1852.5 628.0L1848.5 628.0L1844.5 628.0L1840.5 628.0L1836.5 628.0L1832.5 628.0L1828.5 628.0L1824.5 628.0L1820.5 628.0L1816.5 628.0L1812.5 628.0L1808.5 628.0L1804.5 628.0L1800.5 628.0L1796.5 628.0L1792.5 628.0L1788.5 628.0L1784.5 628.0L1780.5 628.0L1776.5 628.0L1772.5 628.0L1768.5 628.0L1764.5 628.0L1760.5 628.0L1756.5 628.0L1752.5 628.0L1748.5 628.0L1744.5 628.0L1740.5 628.0L1736.5 628.0L1732.5 628.0L1728.5 628.0L1724.5 628.0L1720.5 628.0L1716.5 628.0L1712.5 628.0L1708.5 628.0L1704.5 628.0L1700.5 628.0L1696.5 628.0L1692.5 628.0L1688.5 628.0L1684.5 628.0L1680.5 628.0L1676.5 628.0L1672.5 628.0L1668.5 628.0L1664.5 628.0L1660.5 628.0L1656.5 628.0L1652.5 628.0L1648.5 628.0L1644.5 628.0L1640.5 628.0L1636.5 628.0L1632.5 628.0L1628.5 628.0L1624.5 628.0L1620.5 628.0L1616.5 628.0L1612.5 628.0L1608.5 628.0L1604.5 628.0L1600.5 628.0L1596.5 628.0L1592.5 628.0L1588.5 628.0L1584.5 628.0L1580.5 628.0L1576.5 628.0L1572.5 628.0L1568.5 628.0L1564.5 628.0L1560.5 628.0L1556.5 628.0L1552.5 628.0L1548.5 628.0L1544.5 628.0L1540.5 628.0L1536.5 628.0L1532.5 628.0L1528.5 628.0L1524.5 628.0L1520.5 628.0L1516.5 628.0L1512.5 628.0L1508.5 628.0L1504.5 628.0L1500.5 628.0L1496.5 628.0L1492.5 628.0L1488.5 628.0L1484.5 628.0L1480.5 628.0L1476.5 628.0L1472.5 628.0L1468.5 628.0L1464.5 628.0L1460.5 628.0L1456.5 628.0L1452.5 628.0L1448.5 628.0L1444.5 628.0L1440.5 628.0L1436.5 628.0L1432.5 628.0L1428.5 628.0L1424.5 628.0L1420.5 628.0L1416.5 627.5L1412.5 627.0L1408.5 626.5L1404.5 625.9L1400.5 625.3L1396.5 624.7L1392.5 624.0L1388.5 623.2L1384.5 622.4L1380.5 621.4L1376.5 620.0L1372.5 616.8Z" fill="rgba(217,160,102,.14)"/>
<path d="M1372.5 616.8L1376.5 613.6L1380.5 612.2L1384.5 611.2L1388.5 610.4L1392.5 609.6L1396.5 608.9L1400.5 608.3L1404.5 607.7L1408.5 607.1L1412.5 606.6L1416.5 606.1L1420.5 605.6L1424.5 605.2L1428.5 604.8L1432.5 604.3L1436.5 603.9L1440.5 603.5L1444.5 603.1L1448.5 602.8L1452.5 602.4L1456.5 602.0L1460.5 601.7L1464.5 601.4L1468.5 601.0L1472.5 600.7L1476.5 600.4L1480.5 600.1L1484.5 599.8L1488.5 599.5L1492.5 599.2L1496.5 598.9L1500.5 598.6L1504.5 598.3L1508.5 598.0L1512.5 597.8L1516.5 597.5L1520.5 597.2L1524.5 597.0L1528.5 596.7L1532.5 596.4L1536.5 596.2L1540.5 595.9L1544.5 595.7L1548.5 595.4L1552.5 595.2L1556.5 595.0L1560.5 594.7L1564.5 594.5L1568.5 594.3L1572.5 594.0L1576.5 593.8L1580.5 593.6L1584.5 593.4L1588.5 593.1L1592.5 592.9L1596.5 592.7L1600.5 592.5L1604.5 592.3L1608.5 592.1L1612.5 591.9L1616.5 591.7L1620.5 591.4L1624.5 591.2L1628.5 591.0L1632.5 590.8L1636.5 590.6L1640.5 590.4L1644.5 590.2L1648.5 590.1L1652.5 589.9L1656.5 589.7L1660.5 589.5L1664.5 589.3L1668.5 589.1L1672.5 588.9L1676.5 588.7L1680.5 588.5L1684.5 588.4L1688.5 588.2L1692.5 588.0L1696.5 587.8L1700.5 587.6L1704.5 587.5L1708.5 587.3L1712.5 587.1L1716.5 586.9L1720.5 586.8L1724.5 586.6L1728.5 586.4L1732.5 586.3L1736.5 586.1L1740.5 585.9L1744.5 585.7L1748.5 585.6L1752.5 585.4L1756.5 585.3L1760.5 585.1L1764.5 584.9L1768.5 584.8L1772.5 584.6L1776.5 584.4L1780.5 584.3L1784.5 584.1L1788.5 584.0L1792.5 583.8L1796.5 583.6L1800.5 583.5L1804.5 583.3L1808.5 583.2L1812.5 583.0L1816.5 582.9L1820.5 582.7L1824.5 582.6L1828.5 582.4L1832.5 582.3L1836.5 582.1L1840.5 582.0L1844.5 581.8L1848.5 581.7L1852.5 581.5L1856.5 581.4L1860.5 581.2L1864.5 581.1L1868.5 580.9L1872.5 580.8L1876.5 580.7L1880.5 580.5L1884.0 580.4" fill="none" stroke="rgba(217,160,102,.5)" stroke-width="1" stroke-dasharray="4 3"/>
<path d="M1372.5 616.8L1376.5 620.0L1380.5 621.4L1384.5 622.4L1388.5 623.2L1392.5 624.0L1396.5 624.7L1400.5 625.3L1404.5 625.9L1408.5 626.5L1412.5 627.0L1416.5 627.5L1420.5 628.0L1424.5 628.0L1428.5 628.0L1432.5 628.0L1436.5 628.0L1440.5 628.0L1444.5 628.0L1448.5 628.0L1452.5 628.0L1456.5 628.0L1460.5 628.0L1464.5 628.0L1468.5 628.0L1472.5 628.0L1476.5 628.0L1480.5 628.0L1484.5 628.0L1488.5 628.0L1492.5 628.0L1496.5 628.0L1500.5 628.0L1504.5 628.0L1508.5 628.0L1512.5 628.0L1516.5 628.0L1520.5 628.0L1524.5 628.0L1528.5 628.0L1532.5 628.0L1536.5 628.0L1540.5 628.0L1544.5 628.0L1548.5 628.0L1552.5 628.0L1556.5 628.0L1560.5 628.0L1564.5 628.0L1568.5 628.0L1572.5 628.0L1576.5 628.0L1580.5 628.0L1584.5 628.0L1588.5 628.0L1592.5 628.0L1596.5 628.0L1600.5 628.0L1604.5 628.0L1608.5 628.0L1612.5 628.0L1616.5 628.0L1620.5 628.0L1624.5 628.0L1628.5 628.0L1632.5 628.0L1636.5 628.0L1640.5 628.0L1644.5 628.0L1648.5 628.0L1652.5 628.0L1656.5 628.0L1660.5 628.0L1664.5 628.0L1668.5 628.0L1672.5 628.0L1676.5 628.0L1680.5 628.0L1684.5 628.0L1688.5 628.0L1692.5 628.0L1696.5 628.0L1700.5 628.0L1704.5 628.0L1708.5 628.0L1712.5 628.0L1716.5 628.0L1720.5 628.0L1724.5 628.0L1728.5 628.0L1732.5 628.0L1736.5 628.0L1740.5 628.0L1744.5 628.0L1748.5 628.0L1752.5 628.0L1756.5 628.0L1760.5 628.0L1764.5 628.0L1768.5 628.0L1772.5 628.0L1776.5 628.0L1780.5 628.0L1784.5 628.0L1788.5 628.0L1792.5 628.0L1796.5 628.0L1800.5 628.0L1804.5 628.0L1808.5 628.0L1812.5 628.0L1816.5 628.0L1820.5 628.0L1824.5 628.0L1828.5 628.0L1832.5 628.0L1836.5 628.0L1840.5 628.0L1844.5 628.0L1848.5 628.0L1852.5 628.0L1856.5 628.0L1860.5 628.0L1864.5 628.0L1868.5 628.0L1872.5 628.0L1876.5 628.0L1880.5 628.0L1884.0 628.0" fill="none" stroke="rgba(217,160,102,.5)" stroke-width="1" stroke-dasharray="4 3"/>
<path d="M347 401.8H1885" stroke="#ec5a5a" stroke-width="2" stroke-dasharray="6 3"/>
<path d="M1372.5 368V628" stroke="rgba(217,160,102,.85)" stroke-width="2" stroke-dasharray="6 3.5"/>
<path d="M347.0 619.8L349.5 619.7L352.0 620.0L354.5 619.6L357.0 619.9L359.5 619.8L362.0 619.6L364.5 619.9L367.0 619.6L369.5 619.9L372.0 619.6L374.5 619.6L377.0 619.8L379.5 620.1L382.0 619.6L384.5 619.7L387.0 620.0L389.5 620.2L392.0 620.0L394.5 619.8L397.0 620.2L399.5 619.6L402.0 621.2L404.5 620.8L407.0 620.7L409.5 620.6L412.0 620.8L414.5 621.1L417.0 620.7L419.5 621.0L422.0 621.0L424.5 620.8L427.0 620.9L429.5 620.6L432.0 620.6L434.5 620.7L437.0 621.0L439.5 620.8L442.0 620.8L444.5 621.0L447.0 620.9L449.5 620.8L452.0 621.1L454.5 621.0L457.0 620.7L459.5 621.0L462.0 620.9L464.5 621.2L467.0 621.1L469.5 620.8L472.0 621.2L474.5 620.6L477.0 620.8L479.5 621.1L482.0 620.7L484.5 620.9L487.0 620.6L489.5 621.0L492.0 621.1L494.5 621.0L497.0 621.2L499.5 620.8L502.0 621.0L504.5 621.0L507.0 621.0L509.5 620.9L512.0 621.1L514.5 621.2L517.0 620.9L519.5 621.0L522.0 620.6L524.5 621.0L527.0 621.0L529.5 621.2L532.0 621.1L534.5 620.7L537.0 620.8L539.5 621.0L542.0 620.6L544.5 620.9L547.0 620.7L549.5 620.6L552.0 620.6L554.5 621.1L557.0 620.6L559.5 620.7L562.0 620.8L564.5 621.2L567.0 620.6L569.5 620.9L572.0 620.9L574.5 621.2L577.0 621.1L579.5 621.2L582.0 620.7L584.5 620.8L587.0 620.8L589.5 621.2L592.0 621.2L594.5 620.7L597.0 620.7L599.5 620.7L602.0 620.7L604.5 620.9L607.0 621.0L609.5 620.7L612.0 620.6L614.5 620.8L617.0 620.8L619.5 620.9L622.0 621.2L624.5 621.0L627.0 620.9L629.5 621.0L632.0 621.0L634.5 620.6L637.0 621.2L639.5 621.1L642.0 621.2L644.5 621.1L647.0 620.8L649.5 620.8L652.0 620.6L654.5 621.0L657.0 620.6L659.5 620.6L662.0 620.7L664.5 620.7L667.0 620.8L669.5 620.6L672.0 620.6L674.5 620.7L677.0 620.6L679.5 620.8L682.0 620.6L684.5 621.2L687.0 621.0L689.5 620.7L692.0 620.7L694.5 620.8L697.0 620.8L699.5 620.6L702.0 621.1L704.5 621.2L707.0 620.9L709.5 620.9L712.0 620.6L714.5 620.6L717.0 620.8L719.5 620.7L722.0 621.1L724.5 620.7L727.0 620.6L729.5 621.2L732.0 620.9L734.5 620.7L737.0 620.9L739.5 620.6L742.0 620.9L744.5 621.2L747.0 621.2L749.5 621.0L752.0 620.7L754.5 620.8L757.0 620.7L759.5 621.1L762.0 620.9L764.5 621.1L767.0 620.8L769.5 620.7L772.0 621.1L774.5 621.2L777.0 621.1L779.5 621.1L782.0 621.1L784.5 621.1L787.0 620.7L789.5 620.9L792.0 620.8L794.5 620.6L797.0 620.6L799.5 620.7L802.0 620.7L804.5 621.0L807.0 621.2L809.5 620.9L812.0 621.2L814.5 621.2L817.0 621.2L819.5 620.8L822.0 620.7L824.5 620.7L827.0 620.7L829.5 620.7L832.0 621.0L834.5 621.2L837.0 621.1L839.5 620.9L842.0 621.0L844.5 621.1L847.0 620.6L849.5 621.0L850.4 621.0L852.0 617.2L853.6 621.0L854.5 621.1L857.0 621.1L859.5 620.9L862.0 620.7L864.5 621.1L867.0 620.8L869.5 621.1L872.0 621.2L874.5 620.8L877.0 620.8L879.5 621.2L882.0 621.1L884.5 620.7L887.0 620.6L889.5 620.7L892.0 621.2L894.5 621.1L897.0 620.7L899.5 621.1L902.0 621.2L904.5 621.0L907.0 620.8L909.5 620.9L912.0 620.6L914.5 620.6L917.0 621.2L919.5 621.0L922.0 620.9L924.5 621.2L927.0 620.9L929.5 621.2L932.0 621.1L933.8 621.0L936.2 604.2L938.6 621.0L939.5 620.8L942.0 620.7L944.5 621.0L947.0 620.7L949.5 620.8L952.0 620.6L954.5 621.2L957.0 620.8L959.5 620.9L962.0 621.0L964.5 621.2L967.0 620.8L969.5 621.2L972.0 620.9L974.5 620.9L977.0 620.9L979.5 620.6L982.0 620.9L984.5 620.7L987.0 620.6L989.5 621.1L992.0 620.7L994.5 620.9L997.0 621.1L999.5 620.9L1002.0 620.8L1004.5 620.9L1007.0 620.9L1009.5 621.1L1012.0 619.5L1013.4 619.9L1015.0 617.6L1016.6 619.9L1017.0 619.6L1019.5 619.6L1022.0 620.0L1024.5 619.8L1027.0 619.8L1029.5 620.0L1032.0 620.1L1034.5 619.8L1037.0 619.9L1039.5 619.8L1042.0 619.8L1044.5 619.9L1047.0 619.8L1049.5 619.8L1052.0 619.8L1054.5 620.1L1057.0 619.9L1059.5 620.1L1062.0 618.8L1062.4 618.6L1064.2 613.3L1066.0 618.6L1067.0 616.8L1069.5 617.1L1072.0 617.0L1074.5 616.5L1077.0 618.3L1079.5 618.6L1082.0 619.2L1084.5 619.3L1087.0 619.2L1089.5 619.6L1092.0 619.7L1094.5 619.8L1097.0 619.3L1099.5 619.7L1102.0 619.6L1104.5 619.3L1107.0 619.8L1109.5 619.8L1112.0 619.3L1114.5 619.8L1117.0 619.4L1119.5 619.5L1122.0 619.8L1124.5 619.7L1127.0 619.3L1129.5 619.5L1132.0 619.5L1134.5 619.4L1137.0 619.3L1139.5 619.4L1142.0 619.7L1144.5 619.2L1147.0 619.5L1149.5 619.5L1152.0 619.2L1154.5 619.4L1157.0 619.6L1159.5 619.5L1162.0 619.2L1164.5 619.8L1167.0 619.7L1169.5 619.8L1172.0 619.2L1174.5 619.3L1177.0 619.2L1179.5 619.7L1182.0 619.3L1184.5 619.2L1187.0 619.4L1189.5 619.8L1192.0 619.7L1194.5 619.3L1197.0 619.3L1199.5 619.8L1202.0 619.5L1204.5 619.6L1207.0 619.2L1209.5 619.2L1212.0 620.3L1214.5 620.1L1217.0 619.9L1219.5 620.5L1222.0 620.3L1224.5 620.4L1227.0 619.9L1229.5 620.4L1232.0 619.9L1234.5 620.5L1237.0 620.2L1239.5 620.1L1242.0 620.2L1244.5 620.5L1247.0 620.0L1249.5 619.9L1252.0 620.2L1254.5 620.0L1257.0 619.9L1259.5 620.0L1262.0 619.9L1264.5 620.0L1267.0 620.1L1269.5 620.1L1272.0 620.4L1274.5 620.1L1277.0 620.2L1279.5 620.0L1282.0 620.1L1284.5 619.9L1287.0 620.0L1289.5 619.9L1292.0 620.4L1294.5 620.2L1297.0 620.0L1299.5 620.2L1302.0 620.5L1304.5 619.9L1307.0 620.4L1309.5 620.2L1312.0 620.2L1314.5 620.4L1317.0 620.1L1319.5 620.2L1322.0 620.3L1324.5 620.5L1327.0 620.1L1329.5 620.4L1332.0 620.3L1334.5 620.3L1335.4 620.3L1337.0 617.3L1338.6 620.3L1339.5 620.1L1342.0 619.9L1344.5 619.9L1347.0 619.9L1349.5 620.4L1352.0 620.0L1354.5 620.0L1357.0 619.9L1359.5 620.4L1362.0 620.5L1364.5 620.3L1367.0 616.5L1369.5 616.5L1372.0 616.6L1372.5 616.7" fill="none" stroke="#3b82f6" stroke-width="1.5" stroke-linejoin="round"/>
<path d="M1372.5 616.7L1376.5 617.0L1380.5 617.2L1384.5 617.2L1388.5 617.0L1392.5 616.7L1396.5 616.4L1400.5 616.2L1404.5 616.1L1408.5 616.1L1412.5 616.1L1416.5 616.1L1420.5 616.1L1424.5 616.0L1428.5 615.9L1432.5 615.9L1436.5 616.1L1440.5 616.3L1444.5 616.6L1448.5 616.9L1452.5 617.1L1456.5 617.2L1460.5 617.1L1464.5 616.8L1468.5 616.5L1472.5 616.3L1476.5 616.1L1480.5 616.1L1484.5 616.1L1488.5 616.1L1492.5 616.1L1496.5 616.0L1500.5 615.9L1504.5 615.9L1508.5 616.0L1512.5 616.2L1516.5 616.5L1520.5 616.9L1524.5 617.1L1528.5 617.2L1532.5 617.1L1536.5 616.9L1540.5 616.6L1544.5 616.3L1548.5 616.2L1552.5 616.1L1556.5 616.1L1560.5 616.1L1564.5 616.1L1568.5 616.0L1572.5 616.0L1576.5 615.9L1580.5 616.0L1584.5 616.2L1588.5 616.5L1592.5 616.8L1596.5 617.1L1600.5 617.2L1604.5 617.1L1608.5 616.9L1612.5 616.7L1616.5 616.4L1620.5 616.2L1624.5 616.1L1628.5 616.1L1632.5 616.1L1636.5 616.1L1640.5 616.1L1644.5 616.0L1648.5 615.9L1652.5 615.9L1656.5 616.1L1660.5 616.4L1664.5 616.7L1668.5 617.0L1672.5 617.2L1676.5 617.2L1680.5 617.0L1684.5 616.7L1688.5 616.4L1692.5 616.2L1696.5 616.1L1700.5 616.1L1704.5 616.1L1708.5 616.1L1712.5 616.1L1716.5 616.0L1720.5 615.9L1724.5 615.9L1728.5 616.1L1732.5 616.3L1736.5 616.6L1740.5 616.9L1744.5 617.1L1748.5 617.2L1752.5 617.1L1756.5 616.8L1760.5 616.5L1764.5 616.3L1768.5 616.1L1772.5 616.1L1776.5 616.1L1780.5 616.1L1784.5 616.1L1788.5 616.0L1792.5 615.9L1796.5 615.9L1800.5 616.0L1804.5 616.2L1808.5 616.5L1812.5 616.9L1816.5 617.1L1820.5 617.2L1824.5 617.1L1828.5 616.9L1832.5 616.6L1836.5 616.3L1840.5 616.2L1844.5 616.1L1848.5 616.1L1852.5 616.1L1856.5 616.1L1860.5 616.0L1864.5 616.0L1868.5 615.9L1872.5 616.0L1876.5 616.2L1880.5 616.5L1884.0 616.8" fill="none" stroke="#d9a066" stroke-width="2" stroke-dasharray="6 4"/>
<path d="M291 662H303" stroke="#3b82f6" stroke-width="2"/>
<path d="M369 661.7H381" stroke="#d9a066" stroke-width="1.5" stroke-dasharray="3 1.5"/>
<rect x="438.5" y="658.5" width="11.5" height="7" rx="2" fill="#f0e0d0" stroke="#e6c9a8" stroke-width="1" stroke-dasharray="3 1.5"/>
<path d="M507 661.7H519" stroke="#ee5555" stroke-width="1.5" stroke-dasharray="3 1.5"/>
</svg>
<div class="t ax" style="right:1578.5px;top:362.0px">46 cores</div>
<div class="t ax" style="right:1578.5px;top:432.0px">34.5 cores</div>
<div class="t ax" style="right:1578.5px;top:502.0px">23 cores</div>
<div class="t ax" style="right:1578.5px;top:572.0px">11.5 cores</div>
<div class="t ax" style="right:1578.5px;top:642.5px">0m</div>
<div class="t ax" style="left:346.5px;top:630.6px">03/17 16:30</div>
<div class="t ax" style="left:654.4px;transform:translateX(-50%);top:630.6px">03/21 21:30</div>
<div class="t ax" style="left:961.8px;transform:translateX(-50%);top:630.6px">03/26 02:00</div>
<div class="t ax" style="left:1269.2px;transform:translateX(-50%);top:630.6px">03/30 07:00</div>
<div class="t ax" style="left:1576.6px;transform:translateX(-50%);top:630.6px">04/03 11:30</div>
<div class="t ax" style="right:35px;top:630.6px">04/07 16:30</div>
<div class="t" style="left:306.5px;top:657px;font-size:10px;color:#777"><span class="kt">과거 데이터</span></div>
<div class="t" style="left:385.2px;top:657px;font-size:10px;color:#777"><span class="kt">자원 예측</span></div>
<div class="t" style="left:454px;top:657px;font-size:10px;color:#777"><span class="kt">신뢰 구간</span></div>
<div class="t" style="left:522.7px;top:657px;font-size:10px;color:#777"><span class="kt">할당 가능</span></div>
  <div class="card" style="left:274px;top:698px;width:810px;height:270px"></div>
  <svg class="i c1" viewBox="0 0 24 24"><path d="M12 2C6.5 2 2 6.5 2 12S6.5 22 12 22 22 17.5 22 12 17.5 2 12 2M10 17L5 12L6.41 10.59L10 14.17L17.59 6.58L19 8L10 17Z"/></svg>
  <div class="t" style="left:314.7px;top:716px;font-size:13.1px;color:#444"><span class="kt" style="font-weight:500">고갈 예측</span></div>
  <div class="a" style="left:375px;top:714px;width:31px;height:17px;border-radius:3px;background:#d1e9de"></div>
  <div class="t" style="left:380.8px;top:718px;font-size:10px;color:#10b981"><span class="kt" style="font-weight:bold">안전</span></div>
  <svg class="i c2" viewBox="0 0 24 24"><path d="M12 2C6.5 2 2 6.5 2 12S6.5 22 12 22 22 17.5 22 12 17.5 2 12 2M12 20C7.59 20 4 16.41 4 12S7.59 4 12 4 20 7.59 20 12 16.41 20 12 20M16.59 7.58L10 14.17L7.41 11.59L6 13L10 17L18 9L16.59 7.58Z"/></svg>
  <div class="t" style="left:320.5px;top:748.3px;font-size:13.2px;color:#111"><span class="kt" style="font-weight:bold">고갈 위험 없음</span></div>
  <div class="t" style="left:321px;top:767.5px;font-size:11px;color:#9a9895"><span class="kt">예측 기간 내 자원 용량이 안전합니다</span></div>

  <div class="card" style="left:1092px;top:698px;width:810px;height:270px"></div>
  <svg class="i c3" viewBox="0 0 24 24"><path d="M5,19A1,1 0 0,0 6,20H18A1,1 0 0,0 19,19C19,18.79 18.93,18.59 18.82,18.43L13,8.35V4H11V8.35L5.18,18.43C5.07,18.59 5,18.79 5,19M6,22A3,3 0 0,1 3,19C3,18.4 3.18,17.84 3.5,17.37L9,7.81V6A1,1 0 0,1 8,5V4A2,2 0 0,1 10,2H14A2,2 0 0,1 16,4V5A1,1 0 0,1 15,6V7.81L20.5,17.37C20.82,17.84 21,18.4 21,19A3,3 0 0,1 18,22H6M13,16L14.34,14.66L16.27,18H7.73L10.39,13.39L13,16Z"/></svg>
  <div class="t" style="left:1132.5px;top:716px;font-size:13.3px;color:#444"><span class="x" style="width:3.7020em;transform:scaleX(1.0979);word-spacing:-0.0729em;-webkit-text-stroke:.22px currentColor">What-if </span><span class="kt" style="font-weight:500">시뮬레이션</span></div>
  <div class="t" style="left:1109px;top:750px;font-size:11px;color:#777;letter-spacing:.3px"><span class="x" style="width:3.8150em;transform:scaleX(1.0243)">Request</span></div>
  <div class="t" style="left:1157.2px;top:750px;font-size:11px;color:#777"><span class="kt">조정</span></div>
  <div class="t mono" style="left:1185px;top:750.5px;font-size:11px;font-weight:bold;color:#8a9ab5">+0%</div>
  <div class="a" style="left:1109px;top:782px;width:776px;height:4px;border-radius:2px;background:#a9a7a6"></div>
  <div class="a" style="left:1109px;top:781px;width:112px;height:6px;border-radius:3px;background:#ff9800"></div>
  <div class="a" style="left:1210px;top:774px;width:20px;height:20px;border-radius:10px;background:#ff9800;box-shadow:0 1px 3px rgba(0,0,0,.3)"></div>
  <div class="t" style="left:1109px;top:804px;font-size:9px;color:#aaa8a5"><span class="x" style="width:2.3780em;transform:scaleX(1.0186)">-50%</span></div>
  <div class="t" style="left:1491px;top:804px;font-size:9px;color:#aaa8a5"><span class="x" style="width:0.5550em;transform:scaleX(0.9979)">0</span></div>
  <div class="t" style="right:35px;top:804px;font-size:9px;color:#aaa8a5"><span class="x" style="width:3.1410em;transform:scaleX(0.9998)">+300%</span></div>
  <div class="t" style="left:1109px;top:833.5px;font-size:11px;color:#555"><span class="kt">노드 조정</span></div>
  <div class="a" style="left:1410px;top:850px;width:40px;height:40px;border-radius:20px;border:1px solid #f44336;color:#f44336"><svg class="i pm" viewBox="0 0 24 24"><path d="M19,13H5V11H19V13Z"/></svg></div>
  <div class="t" style="left:1459.6px;top:863px;font-size:14px;color:#555">5</div>
  <svg class="a" style="left:1475px;top:866px" width="11" height="10" viewBox="0 0 11 10" aria-hidden="true"><path d="M1 4.75H9M5.6 1.3L9.1 4.75L5.6 8.2" fill="none" stroke="#555" stroke-width="1.1"/></svg><span class="sr">→</span>
  <div class="t" style="left:1492.2px;top:862.8px;font-size:14.4px;color:#333;font-weight:bold">5</div>
  <div class="t" style="left:1508px;top:862.8px;font-size:14px;color:#555"><span class="kt">노드</span></div>
  <div class="a" style="left:1544px;top:850px;width:40px;height:40px;border-radius:20px;border:1px solid #4caf50;color:#4caf50"><svg class="i pm" viewBox="0 0 24 24"><path d="M19,13H13V19H11V13H5V11H11V5H13V11H19V13Z"/></svg></div>
  <div class="a" style="left:1109px;top:904px;width:776px;height:1px;background:#dddbd8"></div>
  <div class="t" style="left:1109px;top:918.5px;font-size:11px;color:#555"><span class="kt">시뮬레이션 영향</span></div>
  <div class="t" style="left:1109px;top:939.5px;font-size:11px;color:#8a8885"><span class="kt">할당 가능</span></div>
  <div class="t mono" style="right:35.5px;top:940px;font-size:11px;font-weight:bold;color:#222">40 cores</div>

  <div class="card" style="left:274px;top:984px;width:1628px;height:72px"></div>
  <svg class="i c4" viewBox="0 0 24 24"><path d="M5,3C3.89,3 3,3.89 3,5V19C3,20.11 3.89,21 5,21H19C20.11,21 21,20.11 21,19V5C21,3.89 20.11,3 19,3H5M5,5H19V19H5V5M7,7V9H17V7H7M7,11V13H17V11H7M7,15V17H14V15H7Z"/></svg>
  <div class="t" style="left:310.2px;top:1000.3px;font-size:12.9px;color:#444"><span class="kt" style="font-weight:500">요약</span></div>
  <div class="t" style="left:291px;top:1029.7px;font-size:12px;color:#555"><span class="kt">자기회귀 이동평균</span><span class="x" style="width:4.0800em;transform:scaleX(0.9476);word-spacing:-0.0414em"> (ARIMA) </span><span class="kt">발산 → 삼중 지수 평활</span><span class="x" style="width:7.3540em;transform:scaleX(1.0625);word-spacing:-0.0670em"> (Holt-Winters) (</span><span class="kt">대체</span><span class="x" style="width:0.8400em;transform:scaleX(1.0084);word-spacing:-0.0557em">). </span><span class="kt">삼중 지수 평활</span><span class="x" style="width:7.0160em;transform:scaleX(1.0651);word-spacing:-0.0675em"> (Holt-Winters) </span><span class="kt">알고리즘</span><span class="x" style="width:2.1670em;transform:scaleX(0.9983);word-spacing:-0.0535em">, 673</span><span class="kt">개 데이터 포인트 →</span><span class="x" style="width:1.8890em;transform:scaleX(0.9979);word-spacing:-0.0534em"> 336</span><span class="kt">개 예측</span><span class="x" style="width:0.5620em;transform:scaleX(1.0150);word-spacing:-0.0571em"> (</span><span class="kt">신뢰도</span><span class="x" style="width:2.8710em;transform:scaleX(1.0133);word-spacing:-0.0568em">: 95%)</span></div>
<svg class="a" style="left:1816px;top:906px" width="72" height="84" viewBox="1816 906 72 84" aria-label="AI assistant mascot">
  <defs>
    <radialGradient id="GH" cx=".62" cy=".3" r=".8"><stop offset="0" stop-color="#fffdfa"/><stop offset=".6" stop-color="#f6ece3"/><stop offset="1" stop-color="#dfc9bb"/></radialGradient>
    <radialGradient id="GB" cx=".6" cy=".25" r=".85"><stop offset="0" stop-color="#fffaf5"/><stop offset=".65" stop-color="#f3e6dc"/><stop offset="1" stop-color="#d9bfb0"/></radialGradient>
    <linearGradient id="GR" x1="0" y1="0" x2="1" y2="1"><stop offset="0" stop-color="#f2452c"/><stop offset="1" stop-color="#d42814"/></linearGradient>
    <radialGradient id="GE" cx=".5" cy=".5" r=".6"><stop offset="0" stop-color="#7dfff4"/><stop offset=".55" stop-color="#10eedd"/><stop offset="1" stop-color="#04b9b0"/></radialGradient>
  </defs>
  <path d="M1842.5 955.5L1833 949.5" stroke="#f1e3d8" stroke-width="5.2" stroke-linecap="round"/>
  <ellipse cx="1830.4" cy="943.6" rx="4.3" ry="6.6" transform="rotate(-14 1830.4 943.6)" fill="url(#GR)"/>
  <ellipse cx="1834.6" cy="943" rx="1.7" ry="3.4" transform="rotate(24 1834.6 943)" fill="#e0301b"/>
  <path d="M1866 957L1871.3 961.5" stroke="#f1e3d8" stroke-width="5" stroke-linecap="round"/>
  <ellipse cx="1873.3" cy="966" rx="3.7" ry="5.3" transform="rotate(-16 1873.3 966)" fill="url(#GR)"/>
  <path d="M1839.6 962C1841 970 1847 977.5 1853.8 982.2C1860.5 977.5 1866.5 970 1867.6 962Z" fill="url(#GR)"/>
  <path d="M1853.7 948.5C1862 948.5 1868 953 1868 960C1868 962.5 1867.6 964 1867 965.2C1863 968.2 1858.5 969.6 1853.6 969.6C1848.5 969.6 1844 968.2 1840.2 965.2C1839.6 964 1839.3 962.5 1839.3 960C1839.3 953 1845.4 948.5 1853.7 948.5Z" fill="url(#GB)"/>
  <path d="M1845.8 949.2H1861.4C1859.5 951.6 1856.6 954 1853.6 954.8C1850.6 954 1847.6 951.6 1845.8 949.2Z" fill="#e43520"/>
  <g transform="translate(1838.6 951.2) scale(.315)" fill="#e0301b"><path d="M32.79 18.30A4.30 4.30 0 0 1 40.41 18.30L51.17 38.80A4.30 4.30 0 0 1 49.36 44.61L49.36 44.61A4.30 4.30 0 0 1 43.56 42.80L36.21 28.80A2.80 2.80 0 0 0 32.42 27.62L32.42 27.62A2.80 2.80 0 0 0 31.25 31.40L35.64 39.77A3.50 3.50 0 0 1 32.54 44.90L22.96 44.90A2.50 2.50 0 0 1 20.75 41.24Z"/><circle cx="53.8" cy="20.6" r="5"/><path d="M60.3 31.2L65 40.4" stroke="#e0301b" stroke-width="9.2" stroke-linecap="round"/></g>
  <ellipse cx="1872" cy="934.2" rx="1.9" ry="4.6" fill="#e43520"/>
  <path d="M1853.5 912.8C1860.5 912.8 1871.2 927.5 1871.2 937.6C1871.2 946 1864.5 949.4 1853.6 949.4C1843 949.4 1837.6 946 1837.6 937.6C1837.6 927.5 1846.8 912.8 1853.5 912.8Z" fill="url(#GH)"/>
  <path d="M1849 922.9L1853.2 918.4L1857.6 922.9Q1853.2 923.9 1849 922.9Z" fill="#ea3a24"/>
  <rect x="1840.3" y="926.9" width="25.8" height="18.9" rx="8.6" ry="8.2" fill="#1a1411"/>
  <ellipse cx="1845.7" cy="936.3" rx="2.8" ry="4.2" fill="url(#GE)"/>
  <ellipse cx="1859.4" cy="936.3" rx="2.8" ry="4.2" fill="url(#GE)"/>
</svg>

</div>
</body></html>
